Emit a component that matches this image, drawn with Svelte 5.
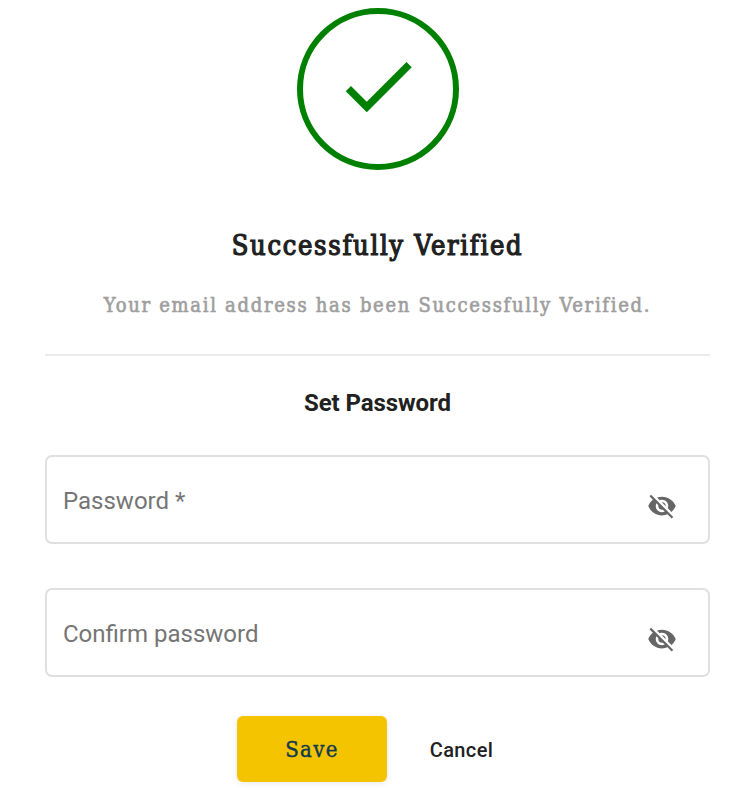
<script>
  const fields = ['Password *', 'Confirm password'];
</script>

<main>
  <div class="badge">
    <svg width="90" height="90" viewBox="0 0 24 24"><path d="M9 16.2L4.8 12l-1.4 1.4L9 19 21 7l-1.4-1.4z" /></svg>
  </div>
  <h1>Successfully Verified</h1>
  <p>Your email address has been Successfully Verified.</p>
  <hr />
  <h2>Set Password</h2>
  {#each fields as label}
    <div class="field">
      <span class="label">{label}</span>
      <svg class="eye" width="30" height="30" viewBox="0 0 24 24"><path d="M12 7c2.76 0 5 2.24 5 5 0 .65-.13 1.26-.36 1.83l2.92 2.92c1.51-1.26 2.7-2.89 3.43-4.75-1.73-4.39-6-7.5-11-7.5-1.4 0-2.74.25-3.98.7l2.16 2.16C10.74 7.13 11.35 7 12 7zM2 4.27l2.28 2.28.46.46C3.08 8.3 1.78 10.02 1 12c1.73 4.39 6 7.5 11 7.5 1.55 0 3.03-.3 4.38-.84l.42.42L19.73 22 21 20.73 3.27 3 2 4.27zM7.53 9.8l1.55 1.55c-.05.21-.08.43-.08.65 0 1.66 1.34 3 3 3 .22 0 .44-.03.65-.08l1.55 1.55c-.67.33-1.41.53-2.2.53-2.76 0-5-2.24-5-5 0-.79.2-1.53.53-2.2zm4.31-.78l3.15 3.15.02-.16c0-1.66-1.34-3-3-3l-.17.01z" /></svg>
    </div>
  {/each}
  <div class="actions">
    <button class="save">Save</button>
    <button class="cancel">Cancel</button>
  </div>
</main>

<style>
  :global(body) { background: #fff; }
  main {
    box-sizing: border-box;
    width: 750px;
    height: 791px;
    padding: 8px 40px 0 45px;
    display: flex;
    flex-direction: column;
    overflow: hidden;
    font-family: Roboto, sans-serif;
    color: #212121;
  }
  .badge {
    box-sizing: border-box;
    width: 162px;
    height: 162px;
    align-self: center;
    border: 6px solid #008000;
    border-radius: 50%;
    display: flex;
    justify-content: center;
    padding-top: 27px;
  }
  .badge svg { fill: #008000; }
  h1, h2, p, hr { margin: 0; text-align: center; white-space: nowrap; }
  h1, p, .save { font-family: "DejaVu Serif Condensed", "DejaVu Serif", serif; font-stretch: condensed; }
  h1 { margin-top: 56px; font-size: 27px; line-height: 40px; font-weight: 400; letter-spacing: 1.7px; -webkit-text-stroke: 1.2px currentColor; }
  p { margin-top: 24px; font-size: 20px; line-height: 30px; color: #9e9e9e; font-weight: 400; letter-spacing: 1.7px; -webkit-text-stroke: 0.6px currentColor; }
  hr { margin-top: 34px; border: 0; height: 2px; background: #ebebeb; }
  h2 { margin: 32px 0 37px; font-size: 24px; line-height: 30px; font-weight: 700; letter-spacing: -0.07px; }
  .field {
    box-sizing: border-box;
    height: 89px;
    flex: none;
    margin-bottom: 44px;
    padding: 0 31px 0 16px;
    border: 2px solid #e0e0e0;
    border-radius: 7px;
    display: flex;
    align-items: center;
    justify-content: space-between;
    font-size: 24px;
    color: #757575;
  }
  .label { line-height: 30px; margin-top: 2px; }
  .eye { fill: #666; margin-top: 12px; }
  .actions { display: flex; margin: -5px 0 0 192px; gap: 27px; }
  button { border: 0; padding: 0; height: 66px; border-radius: 6px; }
  .save { width: 150px; background: #f5c400; color: #0f3a50; font-size: 22px; letter-spacing: 1.3px; -webkit-text-stroke: 0.4px currentColor; box-shadow: 0 1px 6px rgba(0, 0, 0, 0.1); }
  .cancel { width: 95px; background: transparent; color: #212121; font: 500 20px/30px Roboto, sans-serif; letter-spacing: 0.35px; padding-top: 2px; }
</style>
